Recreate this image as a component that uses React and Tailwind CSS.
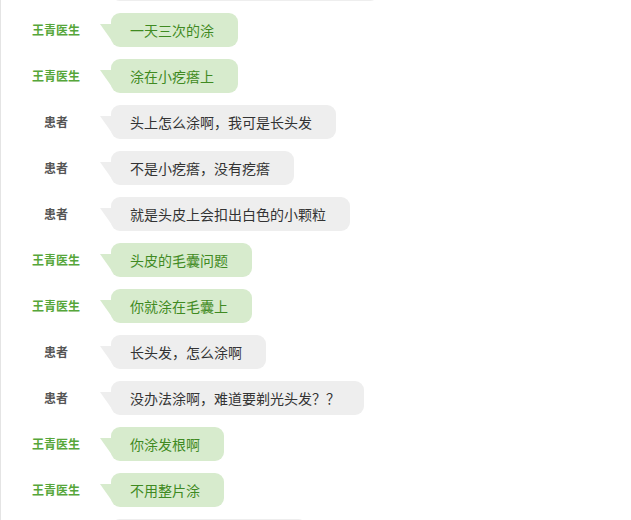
const messages = [
  { from: "patient", width: 268 },
  { from: "doctor", text: "一天三次的涂" },
  { from: "doctor", text: "涂在小疙瘩上" },
  { from: "patient", text: "头上怎么涂啊，我可是长头发" },
  { from: "patient", text: "不是小疙瘩，没有疙瘩" },
  { from: "patient", text: "就是头皮上会扣出白色的小颗粒" },
  { from: "doctor", text: "头皮的毛囊问题" },
  { from: "doctor", text: "你就涂在毛囊上" },
  { from: "patient", text: "长头发，怎么涂啊" },
  { from: "patient", text: "没办法涂啊，难道要剃光头发？？" },
  { from: "doctor", text: "你涂发根啊" },
  { from: "doctor", text: "不用整片涂" },
  { from: "patient", width: 196 },
];

// rows cut by the top/bottom edge carry only the bubble, like the screenshot
function Row({ from, text, width }) {
  const isDoctor = from === "doctor";
  return (
    <div className="flex items-center h-[34px]">
      <div
        className={`w-[110px] text-center text-[12px] font-bold leading-[34px] ${
          isDoctor ? "text-[#56a63a]" : "text-[#555555]"
        }`}
      >
        {text ? (isDoctor ? "王青医生" : "患者") : null}
      </div>
      <div className="relative">
        <svg
          className="absolute left-[-11px] top-[11px]"
          width="12"
          height="17"
          viewBox="0 0 12 17"
        >
          <polygon
            points="0,0 12,0 12,17"
            fill={isDoctor ? "#d7ebcd" : "#eeeeee"}
          />
        </svg>
        <div
          className={`h-[34px] rounded-[9px] pl-[19px] pr-[24px] text-[14px] leading-[34px] whitespace-nowrap ${
            isDoctor ? "bg-[#d7ebcd] text-[#3f8a22]" : "bg-[#eeeeee] text-[#333333]"
          }`}
          style={width ? { width } : undefined}
        >
          {text}
        </div>
      </div>
    </div>
  );
}

export default function App() {
  return (
    <div
      className="h-[520px] w-[631px] overflow-hidden bg-white border-l border-[#e4e4e4]"
      style={{ fontFamily: '"Noto Sans CJK SC", "Noto Sans", sans-serif' }}
    >
      <div className="flex flex-col gap-[12px] mt-[-33px]">
        {messages.map((m, i) => (
          <Row key={i} {...m} />
        ))}
      </div>
    </div>
  );
}
